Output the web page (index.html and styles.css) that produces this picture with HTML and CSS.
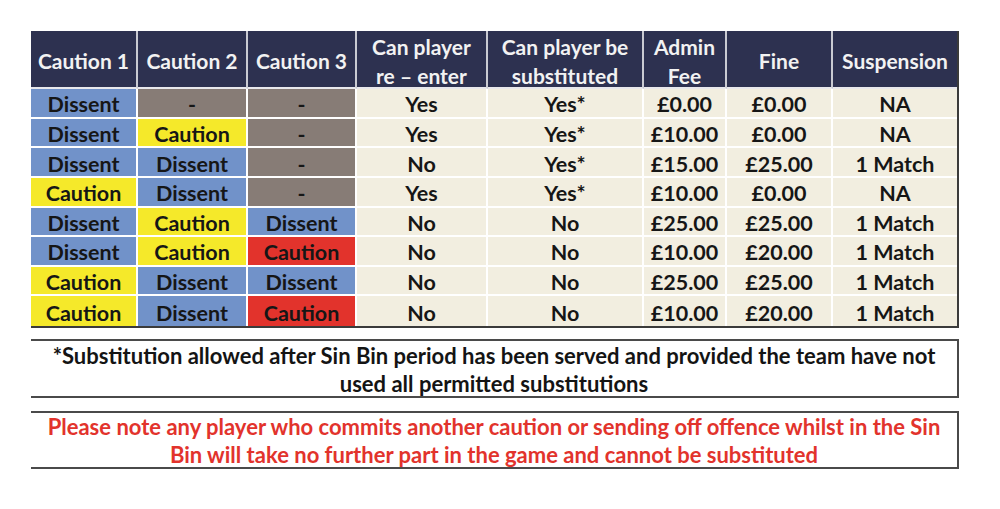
FILE: index.html
```html
<!DOCTYPE html>
<html>
<head>
<meta charset="utf-8">
<link rel="stylesheet" href="styles.css">
</head>
<body>
<div class="page">
  <div class="sheet">
    <div class="h">Caution 1</div>
    <div class="h">Caution 2</div>
    <div class="h">Caution 3</div>
    <div class="h">Can player<br>re – enter</div>
    <div class="h">Can player be<br>substituted</div>
    <div class="h">Admin<br>Fee</div>
    <div class="h">Fine</div>
    <div class="h last">Suspension</div>

    <div class="c blue">Dissent</div><div class="c grey">-</div><div class="c grey">-</div><div class="c cream">Yes</div><div class="c cream">Yes*</div><div class="c cream">£0.00</div><div class="c cream">£0.00</div><div class="c cream last">NA</div>

    <div class="c blue">Dissent</div><div class="c yellow">Caution</div><div class="c grey">-</div><div class="c cream">Yes</div><div class="c cream">Yes*</div><div class="c cream">£10.00</div><div class="c cream">£0.00</div><div class="c cream last">NA</div>

    <div class="c blue">Dissent</div><div class="c blue">Dissent</div><div class="c grey">-</div><div class="c cream">No</div><div class="c cream">Yes*</div><div class="c cream">£15.00</div><div class="c cream">£25.00</div><div class="c cream last">1 Match</div>

    <div class="c yellow">Caution</div><div class="c blue">Dissent</div><div class="c grey">-</div><div class="c cream">Yes</div><div class="c cream">Yes*</div><div class="c cream">£10.00</div><div class="c cream">£0.00</div><div class="c cream last">NA</div>

    <div class="c blue">Dissent</div><div class="c yellow">Caution</div><div class="c blue">Dissent</div><div class="c cream">No</div><div class="c cream">No</div><div class="c cream">£25.00</div><div class="c cream">£25.00</div><div class="c cream last">1 Match</div>

    <div class="c blue">Dissent</div><div class="c yellow">Caution</div><div class="c red">Caution</div><div class="c cream">No</div><div class="c cream">No</div><div class="c cream">£10.00</div><div class="c cream">£20.00</div><div class="c cream last">1 Match</div>

    <div class="c yellow">Caution</div><div class="c blue">Dissent</div><div class="c blue">Dissent</div><div class="c cream">No</div><div class="c cream">No</div><div class="c cream">£25.00</div><div class="c cream">£25.00</div><div class="c cream last">1 Match</div>

    <div class="c yellow bottom">Caution</div><div class="c blue bottom">Dissent</div><div class="c red bottom">Caution</div><div class="c cream bottom">No</div><div class="c cream bottom">No</div><div class="c cream bottom">£10.00</div><div class="c cream bottom">£20.00</div><div class="c cream last bottom">1 Match</div>
  </div>

  <div class="note">*Substitution allowed after Sin Bin period has been served and provided the team have not<br>used all permitted substitutions</div>
  <div class="note warn">Please note any player who commits another caution or sending off offence whilst in the Sin<br>Bin will take no further part in the game and cannot be substituted</div>
</div>
</body>
</html>
```

FILE: styles.css
```css
html, body {
  margin: 0;
  background: #ffffff;
}

.page {
  padding: 31px 0 0 31px;
  font-family: Lato, "Open Sans", "Liberation Sans", sans-serif;
  font-weight: 700;
}

.sheet {
  display: grid;
  grid-template-columns: 107px 110px 109px 131px 156px 83px 106px 124px;
  grid-template-rows: 58px repeat(8, 29.625px);
  width: 928px;
  box-sizing: border-box;
  border-right: 2px solid #3b3b3b;
  border-bottom: 2px solid #3b3b3b;
}

.h, .c {
  box-sizing: border-box;
  display: flex;
  align-items: center;
  justify-content: center;
  text-align: center;
  padding-top: 3px;
}

.h {
  background: #2d3150;
  color: #f2f2f2;
  font-size: 21px;
  line-height: 29px;
  border-right: 2px solid #c9cad2;
  border-bottom: 2px solid #e8e8ec;
}

.c {
  font-size: 21.5px;
  color: #161616;
  border-right: 2px solid #ffffff;
  border-bottom: 2px solid #ffffff;
}

.last { border-right: none; }
.bottom { border-bottom: none; }

.blue { background: #7192c9; }
.grey { background: #877c76; }
.yellow { background: #f5e92a; }
.red { background: #e2332c; }
.cream { background: #f2eee0; }

.note {
  box-sizing: border-box;
  width: 928px;
  height: 59px;
  margin-top: 11px;
  padding-top: 2px;
  display: flex;
  align-items: center;
  justify-content: center;
  text-align: center;
  font-size: 22px;
  line-height: 28px;
  color: #141414;
  border-top: 2px solid #4a4a4a;
  border-right: 2px solid #4a4a4a;
  border-bottom: 2px solid #4a4a4a;
}

.warn {
  margin-top: 13px;
  height: 58px;
  color: #e2332c;
}
```
